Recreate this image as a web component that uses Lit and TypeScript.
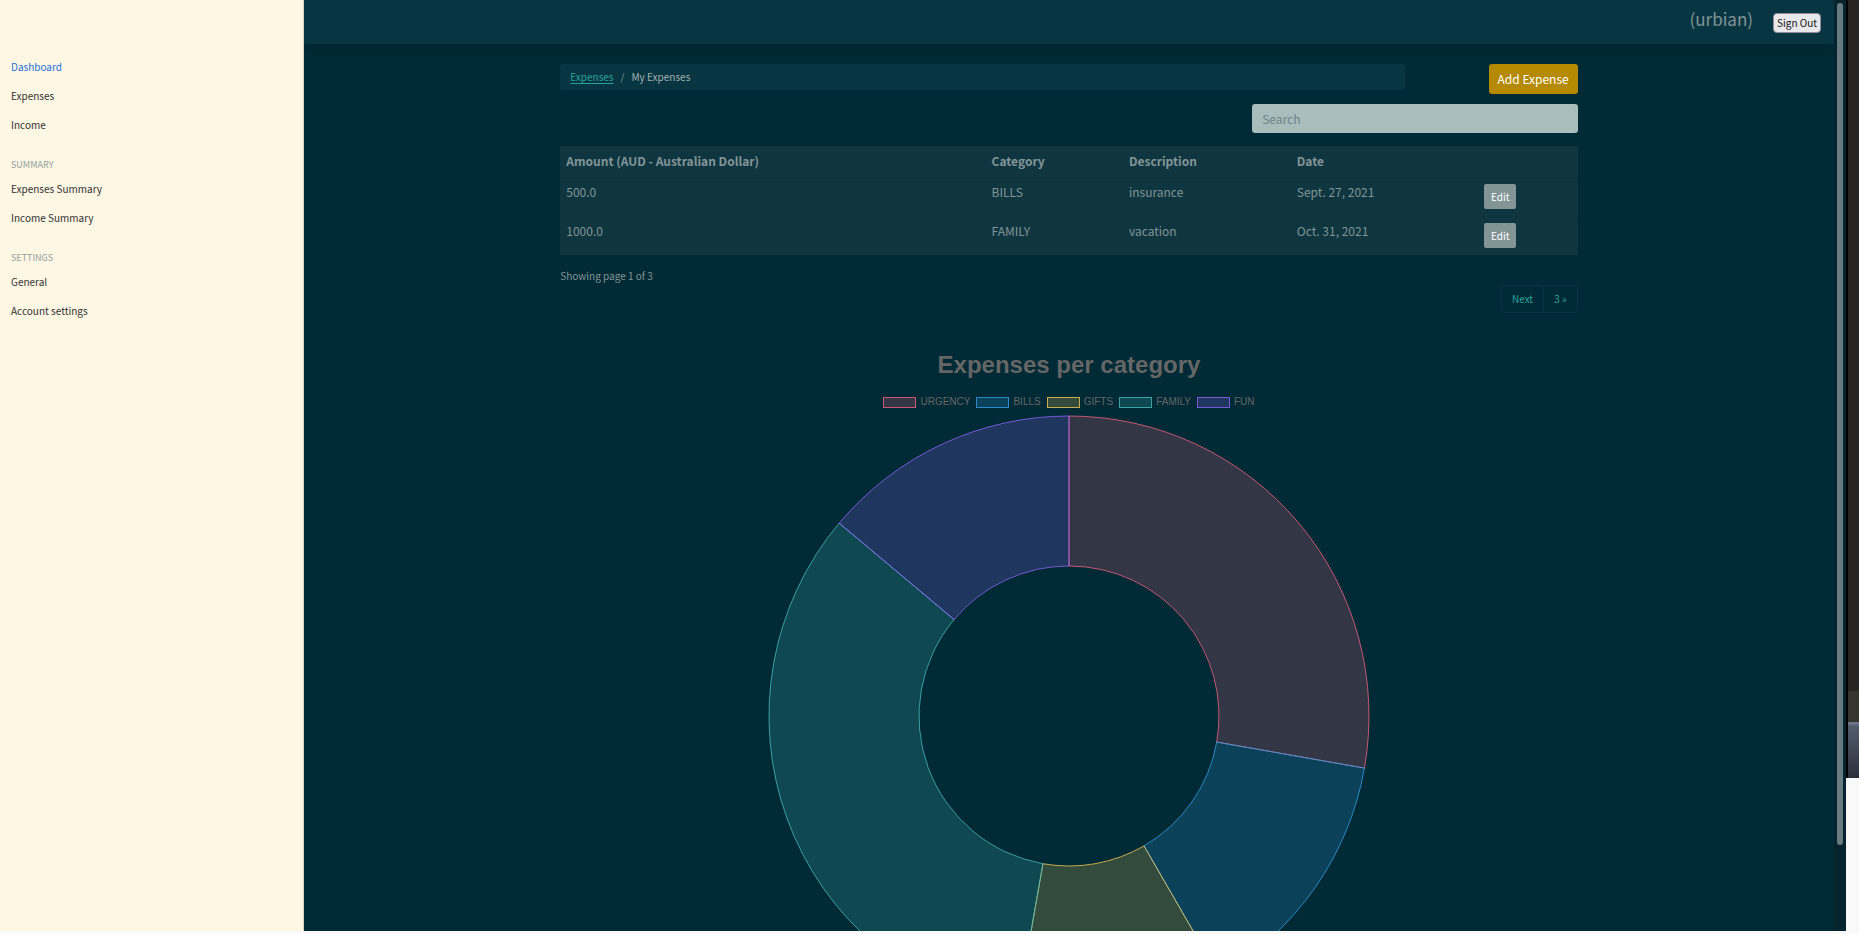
import { LitElement, html, css, svg } from "lit";
import { customElement } from "lit/decorators.js";

interface Slice { label: string; value: number; rgb: string; }
interface Expense { amount: string; category: string; description: string; date: string; }

const SLICES: Slice[] = [
  { label: "URGENCY", value: 1000, rgb: "255, 99, 132" },
  { label: "BILLS", value: 500, rgb: "54, 162, 235" },
  { label: "GIFTS", value: 400, rgb: "255, 206, 86" },
  { label: "FAMILY", value: 1200, rgb: "75, 192, 192" },
  { label: "FUN", value: 500, rgb: "153, 102, 255" },
];

const EXPENSES: Expense[] = [
  { amount: "500.0", category: "BILLS", description: "insurance", date: "Sept. 27, 2021" },
  { amount: "1000.0", category: "FAMILY", description: "vacation", date: "Oct. 31, 2021" },
];

const fill = (s: Slice) => `rgba(${s.rgb}, 0.2)`;
const line = (s: Slice) => `rgba(${s.rgb}, 0.75)`;

@customElement("expense-chart")
export class ExpenseChart extends LitElement {
  static styles = css`
    :host { display: flex; flex-direction: column; align-items: center; color: #666; font-family: "Liberation Sans", Arial, sans-serif; }
    .title { margin: 0; font-size: 24px; line-height: 32px; font-weight: 700; }
    .legend { display: flex; flex-wrap: wrap; gap: 6px; margin: 13px 0 0; padding: 0; list-style: none; font-size: 10px; line-height: 16px; }
    .item { display: flex; align-items: center; gap: 4px; }
    .swatch { box-sizing: border-box; width: 33px; height: 11px; border: 1px solid; }
    .ring { display: block; width: 602px; max-width: 100%; margin-top: 5px; }
  `;

  private arcs() {
    const total = SLICES.reduce((sum, s) => sum + s.value, 0);
    const outer = 300;
    const inner = 150;
    const at = (radius: number, turn: number) => {
      const a = turn * 2 * Math.PI;
      return `${(301 + radius * Math.sin(a)).toFixed(2)} ${(301 - radius * Math.cos(a)).toFixed(2)}`;
    };
    let start = 0;
    return SLICES.map((s) => {
      const end = start + s.value / total;
      const large = end - start > 0.5 ? 1 : 0;
      const d = `M${at(outer, start)}A${outer} ${outer} 0 ${large} 1 ${at(outer, end)}L${at(inner, end)}A${inner} ${inner} 0 ${large} 0 ${at(inner, start)}Z`;
      start = end;
      return svg`<path d=${d} fill=${fill(s)} stroke=${line(s)} stroke-width="1"></path>`;
    });
  }

  render() {
    return html`
      <h2 class="title">Expenses per category</h2>
      <ul class="legend">
        ${SLICES.map((s) => html`<li class="item">
          <span class="swatch" style="background:${fill(s)};border-color:${line(s)}"></span>${s.label}
        </li>`)}
      </ul>
      <svg class="ring" viewBox="0 0 602 602" role="img" aria-label="Expenses per category">${this.arcs()}</svg>
    `;
  }
}

@customElement("side-nav")
export class SideNav extends LitElement {
  static styles = css`
    :host { display: block; box-sizing: border-box; padding: 52px 11px 0; background: #fdf6e3; border-right: 1px solid #d5d4c4; font-size: 10px; }
    .list { margin: 0; padding: 0; list-style: none; }
    .link { display: block; line-height: 29px; color: #333; text-decoration: none; }
    .link.active { color: #2470dc; }
    .heading { margin: 16px 0 0; font-size: 9px; line-height: 19px; font-weight: 400; text-transform: uppercase; color: #93a1a1; }
  `;

  private links(names: string[], active = "") {
    return html`<ul class="list">${names.map((n) => html`<li>
      <a class="link ${n === active ? "active" : ""}" href="#">${n}</a>
    </li>`)}</ul>`;
  }

  render() {
    return html`<nav>
      ${this.links(["Dashboard", "Expenses", "Income"], "Dashboard")}
      <h6 class="heading">Summary</h6>
      ${this.links(["Expenses Summary", "Income Summary"])}
      <h6 class="heading">Settings</h6>
      ${this.links(["General", "Account settings"])}
    </nav>`;
  }
}

@customElement("app-root")
export class AppRoot extends LitElement {
  static styles = css`
    :host { display: flex; height: 100vh; overflow: hidden; background: #f9f9f9; font-family: "Noto Sans CJK SC", "Noto Sans", sans-serif; color: #839496; }
    .window { flex: 1; min-width: 0; display: flex; margin-bottom: 3px; background: #002b36; }
    .sidebar { flex: 0 0 304px; }
    .page { flex: 1; min-width: 0; overflow: hidden; }
    .track { flex: 0 0 12px; box-sizing: border-box; padding: 3px 3px 86px; display: flex; background: #06242d; }
    .thumb { flex: 1; border-radius: 3px; background: #687b80; }

    .topbar { display: flex; justify-content: flex-end; align-items: flex-start; gap: 20px; box-sizing: border-box; height: 44px; padding: 0 13px 0 16px; background: #073642; box-shadow: 0 2px 12px rgba(0, 0, 0, 0.18); }
    .user { font-size: 17px; line-height: 38px; }
    .signout { height: 20px; margin-top: 13px; padding: 0 3px; font: inherit; font-size: 10px; line-height: 16px; color: #111; background: #e9e9ed; border: 1px solid #8f8f9d; border-radius: 4px; }

    .content { width: 66.5%; margin: 0 auto; padding-top: 20px; }
    .head { display: grid; grid-template-columns: 83% auto; justify-content: space-between; align-items: start; }
    .crumbs { display: flex; gap: 7px; margin: 0; padding: 0 10px; list-style: none; font-size: 10px; line-height: 26px; background: #073642; border-radius: 3px; }
    .crumbs a { color: #2aa198; text-underline-offset: 2px; }
    .crumbs .current { color: #a3b0b1; }
    .add { padding: 0 9px; line-height: 30px; font-size: 12px; color: #fff; background: #b58900; border-radius: 3px; text-decoration: none; }
    .search { display: flex; justify-content: flex-end; margin-top: 10px; }
    .search input { box-sizing: border-box; width: 32%; height: 29px; padding: 0 10px; border: 0; border-radius: 3px; font: inherit; font-size: 12px; color: #073642; background: #a9bdbd; }
    .search input::placeholder { color: #6a858b; opacity: 1; }

    .expenses { width: 100%; margin-top: 13px; border-collapse: collapse; table-layout: fixed; text-align: left; font-size: 12px; line-height: 18px; background: #0f3640; }
    .expenses th, .expenses td { box-sizing: border-box; padding: 6px; vertical-align: top; }
    .expenses th { height: 31px; }
    .expenses td { height: 39px; padding-top: 5px; border-top: 1px solid #0b333e; }
    .c-amount { width: 41.8%; }
    .c-category { width: 13.5%; }
    .c-description { width: 16.5%; }
    .c-date { width: 18.4%; }
    .edit { display: inline-block; margin-top: 1px; padding: 0 7px; line-height: 25px; font-size: 10px; color: #fff; background: #839496; border-radius: 2px; text-decoration: none; }

    .showing { margin: 12px 0 0; font-size: 10px; line-height: 18px; }
    .pager { display: flex; justify-content: flex-end; }
    .pager ul { display: flex; margin: 0; padding: 0; list-style: none; border: 1px solid #073642; border-radius: 4px; }
    .pager li + li { border-left: 1px solid #073642; }
    .pager a { display: block; padding: 0 10px; font-size: 10px; line-height: 26px; color: #2aa198; text-decoration: none; }
    .chart { margin-top: 36px; }

    .backdrop { flex: 0 0 13px; display: flex; flex-direction: column; }
    .backdrop div { box-sizing: border-box; border-left: 2px solid #000; }
    .far { flex: 0 0 74%; background: #272521; }
    .near { flex: 0 0 31px; background: #36352f; }
    .glass { flex: 0 0 56px; background: linear-gradient(#6c7687 0 2px, #525d6c 4px, #2c2f3b); }
  `;

  render() {
    return html`
      <div class="window">
        <side-nav class="sidebar"></side-nav>
        <main class="page">
          <header class="topbar">
            <span class="user">(urbian)</span>
            <button class="signout" type="button">Sign Out</button>
          </header>
          <div class="content">
            <div class="head">
              <ol class="crumbs">
                <li><a href="#">Expenses</a></li>
                <li>/</li>
                <li class="current">My Expenses</li>
              </ol>
              <a class="add" href="#">Add Expense</a>
            </div>
            <div class="search"><input type="text" placeholder="Search" aria-label="Search" /></div>
            <table class="expenses">
              <thead>
                <tr>
                  <th class="c-amount">Amount (AUD - Australian Dollar)</th>
                  <th class="c-category">Category</th>
                  <th class="c-description">Description</th>
                  <th class="c-date">Date</th>
                  <th></th>
                </tr>
              </thead>
              <tbody>
                ${EXPENSES.map((e) => html`<tr>
                  <td>${e.amount}</td>
                  <td>${e.category}</td>
                  <td>${e.description}</td>
                  <td>${e.date}</td>
                  <td><a class="edit" href="#">Edit</a></td>
                </tr>`)}
              </tbody>
            </table>
            <p class="showing">Showing page 1 of 3</p>
            <nav class="pager" aria-label="Pages">
              <ul><li><a href="#">Next</a></li><li><a href="#">3 »</a></li></ul>
            </nav>
            <expense-chart class="chart"></expense-chart>
          </div>
        </main>
        <div class="track"><div class="thumb"></div></div>
      </div>
      <div class="backdrop"><div class="far"></div><div class="near"></div><div class="glass"></div></div>
    `;
  }
}
